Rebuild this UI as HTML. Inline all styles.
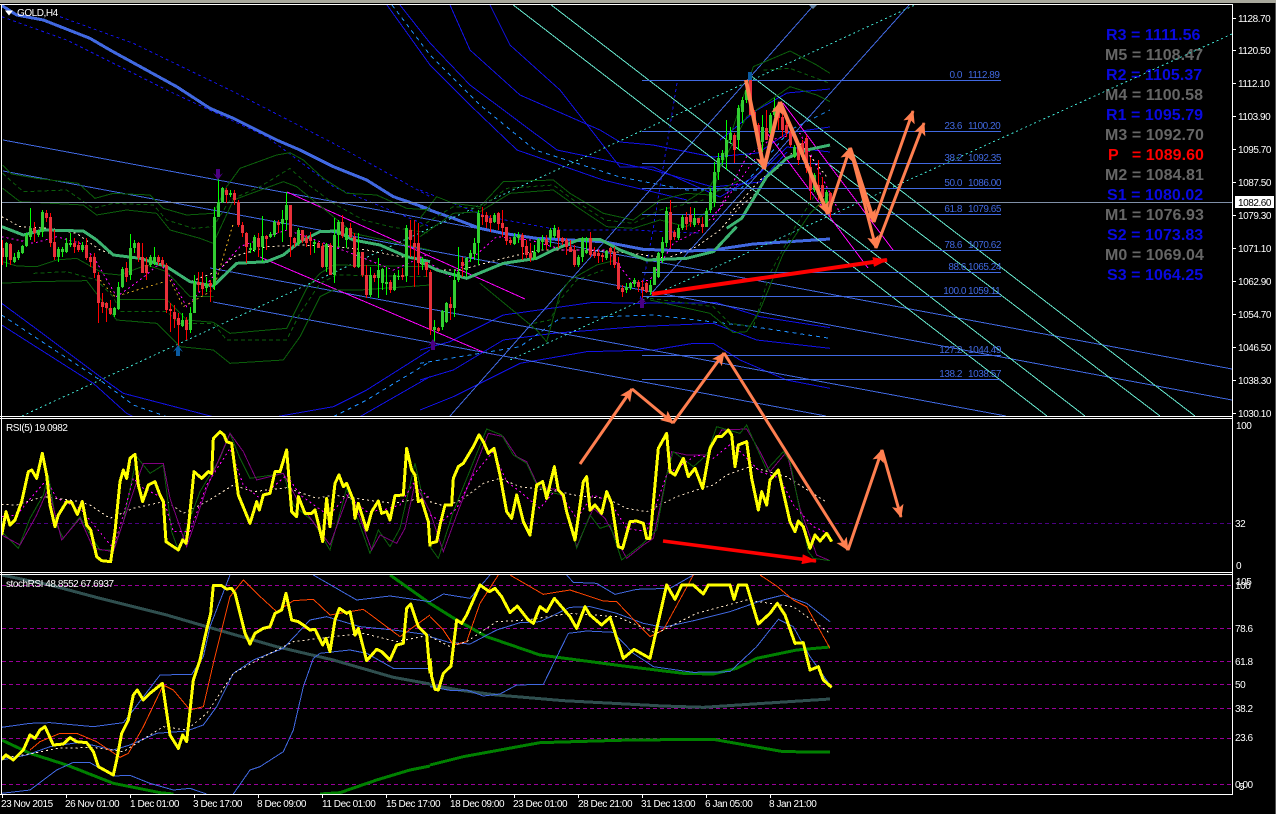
<!DOCTYPE html>
<html><head><meta charset="utf-8"><title>GOLD,H4</title>
<style>
html,body{margin:0;padding:0;background:#000;width:1276px;height:814px;overflow:hidden}
svg{display:block;font-family:"Liberation Sans",sans-serif}
polyline,line,path{fill:none;vector-effect:non-scaling-stroke}
.cr{shape-rendering:crispEdges}
.g{stroke:#0b5e0b;stroke-width:1}
.gd{stroke:#0b5e0b;stroke-width:1;stroke-dasharray:4 3}
.b{stroke:#1212e8;stroke-width:1}
.bd{stroke:#1e90ff;stroke-width:1;stroke-dasharray:4 4}
.bd2{stroke:#1212e8;stroke-width:1;stroke-dasharray:3 3}
.rb{stroke:#4169e1;stroke-width:1}
.rb3{stroke:#4169e1;stroke-width:3}
.cy{stroke:#40e0d0;stroke-width:1;stroke-dasharray:2 3}
.aq{stroke:#66e6cc;stroke-width:1}
.tl{stroke:#3cb371;stroke-width:3}
.cd{stroke:#ffe8c8;stroke-width:1;stroke-dasharray:2 3}
.mg{stroke:#ff00ff;stroke-width:1}
.md{stroke:#ff00ff;stroke-width:1;stroke-dasharray:2 3}
.od{stroke:#daa520;stroke-width:1;stroke-dasharray:2 3}
.y{stroke:#ffff00;stroke-width:3;stroke-linejoin:round}
.pu{stroke:#800080;stroke-width:1}
.lv{stroke:#990099;stroke-width:1;stroke-dasharray:4 3}
.sl{stroke:#2f4f4f;stroke-width:3}
.gr{stroke:#008000;stroke-width:3}
.rd{stroke:#ff4500;stroke-width:1}
.o{stroke:#ff7f50;stroke-width:3;marker-end:url(#ao)}
.ax{fill:#fff;font-size:10px;letter-spacing:-.45px}
.fb{fill:#4169e1;font-size:10px;letter-spacing:-.45px}
.pv{font-size:16px;font-weight:bold;letter-spacing:.05px}
</style></head><body>
<svg width="1276" height="814" viewBox="0 0 1276 814" xmlns="http://www.w3.org/2000/svg">
<defs>
<marker id="ao" markerUnits="userSpaceOnUse" markerWidth="14" markerHeight="12" refX="12" refY="6" orient="auto"><path d="M0 0L13 6L0 12L3 6Z" style="fill:#ff7f50;stroke:none"/></marker>
<marker id="ar" markerUnits="userSpaceOnUse" markerWidth="16" markerHeight="10" refX="14" refY="5" orient="auto"><path d="M0 0L15 5L0 10Z" style="fill:#ff0000;stroke:none"/></marker>
<clipPath id="c1"><rect x="2" y="5" width="1230" height="411"/></clipPath>
<clipPath id="c2"><rect x="2" y="419" width="1230" height="152"/></clipPath>
<clipPath id="c3"><rect x="2" y="575" width="1230" height="219"/></clipPath>
</defs>
<rect width="1276" height="814" fill="#000"/>
<rect x="0" y="0" width="1276" height="3" fill="#a8a89c"/>
<rect x="1275" y="3" width="1" height="811" fill="#555"/>

<!-- MAIN PANEL -->
<g clip-path="url(#c1)" class="cr">
<g><!-- pivots -->
<text class="pv" x="1106" y="40" fill="#0a0ae0">R3 = 1111.56</text>
<text class="pv" x="1105" y="60" fill="#666">M5 = 1108.47</text>
<text class="pv" x="1106" y="80" fill="#0a0ae0">R2 = 1105.37</text>
<text class="pv" x="1105" y="100" fill="#666">M4 = 1100.58</text>
<text class="pv" x="1106" y="120" fill="#0a0ae0">R1 = 1095.79</text>
<text class="pv" x="1105" y="140" fill="#666">M3 = 1092.70</text>
<text class="pv" x="1108" y="160" fill="#f00" xml:space="preserve">P   = 1089.60</text>
<text class="pv" x="1105" y="180" fill="#666">M2 = 1084.81</text>
<text class="pv" x="1107" y="200" fill="#0a0ae0">S1 = 1080.02</text>
<text class="pv" x="1105" y="220" fill="#666">M1 = 1076.93</text>
<text class="pv" x="1107" y="240" fill="#0a0ae0">S2 = 1073.83</text>
<text class="pv" x="1105" y="260" fill="#666">M0 = 1069.04</text>
<text class="pv" x="1107" y="280" fill="#0a0ae0">S3 = 1064.25</text>
</g>
<!-- far blue curves -->
<polyline class="b" points="450,5 470,50 520,95 600,130 620,142 653,145 713,157 758,153 787,133 830,127"/>
<polyline class="b" points="490,5 510,45 560,90 620,167 653,167 720,197 760,173 787,147 830,152"/>
<polyline class="b" points="387,5 430,65 470,105 517,150 603,180 687,200"/>
<polyline class="b" points="400,5 430,43 470,85 557,150 653,170 713,187 760,182 787,152"/>
<polyline class="bd" points="392,5 430,55 480,105 535,150 620,177 687,190 740,190 790,130 830,110"/>
<polyline class="b" points="720,140 757,110 787,93 830,89"/>
<polyline class="bd2" points="677,83 666,150 653,230 640,300"/>
<!-- lower blue bands -->
<g transform="translate(0,150) scale(.33333)">
<polyline class="b" points="5,460 100,530 300,680 370,730 600,790 680,810"/>
<polyline class="b" points="5,525 280,700 380,790 420,810"/>
<polyline class="bd" points="5,495 300,690 400,765 500,800"/>
<polyline class="b" points="830,800 1000,770 1100,720 1290,600"/>
<polyline class="bd" points="1000,800 1100,750 1290,635"/>
<polyline class="b" points="1080,800 1290,680"/>
</g>
<g transform="translate(420,150) scale(.33333)">
<polyline class="b" points="0,600 90,575 250,495 520,457 650,460 890,458 1020,500 1230,533"/>
<polyline class="b" points="0,690 100,660 250,570 400,550 650,530 880,520 1010,570 1230,595"/>
<polyline class="b" points="0,780 100,740 300,640 500,605 700,600 820,580 880,580 960,630 1100,690 1230,715"/>
<polyline class="bd" points="0,640 300,590 420,505 700,495 1000,530 1230,565"/>
</g>
<!-- thick MA -->
<g transform="scale(.33333)">
<polyline class="bd2" points="180,50 400,130 700,275 1000,430 1290,590"/>
<polyline class="bd2" points="5,50 200,120 500,270 800,410 1000,560 1290,680"/>
<polyline class="rb3" points="3,15 50,45 130,60 270,115 330,150 430,205 530,260 630,325 700,355 830,420 900,450 1000,500 1100,540 1180,590 1290,628"/>
</g>
<g transform="translate(420,150) scale(.33333)">
<polyline class="bd2" points="0,120 200,200 420,240 640,240 840,250"/>
<polyline class="rb3" points="0,170 100,205 180,235 250,250 350,265 450,270 550,275 670,298 800,303 880,300 1000,282 1230,267"/>
</g>
<!-- trend lines -->
<polyline class="rb" points="3,140 1232,369"/>
<polyline class="rb" points="3,171 1232,400"/>
<polyline class="rb" points="210,268 1006,416"/>
<polyline class="rb" points="213,302 826,416"/>
<polyline class="rb" points="813,6 450,416"/>
<polyline class="rb" points="910,4 650,295"/>
<polyline class="cy" points="22,416 915,5"/>
<polyline class="cy" points="1232,34 510,360"/>
<polyline class="aq" points="512,4 1047,416"/>
<polyline class="aq" points="550,4 1085,416"/>
<polyline class="aq" points="830,165 1160,416"/>
<polyline class="aq" points="750,75 1195,416"/>
<polyline class="mg" points="287,192 525,299"/>
<polyline class="mg" points="260,257 483,352"/>
<polyline class="mg" points="783,103 893,250"/>
<polyline class="mg" points="767,133 868,268"/>
<!-- green bands -->
<g transform="translate(0,150) scale(.33333)">
<polyline class="g" points="8,45 35,72 110,85 235,100 285,145 340,130 450,135 490,175 560,195 640,190 680,110 720,55 830,15 870,8 910,30 970,85 1040,130 1130,135 1220,175 1290,180"/>
<polyline class="gd" points="8,70 70,125 200,120 280,175 340,160 460,165 500,210 580,235 640,230 690,150 780,110 870,55 920,100 1000,160 1090,210 1170,230 1290,250"/>
<polyline class="g" points="8,115 60,155 250,165 290,195 380,180 470,190 510,240 600,265 640,280 700,150 850,95 890,110 1000,200 1060,250 1290,300"/>
<polyline class="g" points="8,335 50,348 110,350 170,330 230,325 310,370 360,375 440,345 500,365 570,440 640,440"/>
<polyline class="gd" points="100,370 200,365 290,390 340,440 360,485 500,485 540,520 640,520 680,570 860,570 900,490 960,400 1010,375 1290,380"/>
<polyline class="g" points="0,400 100,395 260,392 350,510 470,520 540,590 640,600 690,640 850,630 900,560 960,440 1000,420 1080,420 1290,405"/>
<polyline class="g" points="360,448 500,448 560,510 640,517 690,550 860,535 920,415 960,370 1000,345 1290,350"/>
</g>
<g transform="translate(420,150) scale(.33333)">
<polyline class="g" points="0,205 50,140 100,160 180,170 250,95 400,90 450,130 550,190 640,210 720,150 800,130 870,135 960,90"/>
<polyline class="gd" points="0,230 100,170 180,175 260,115 400,105 460,150 555,210 640,220 720,180 850,150"/>
<polyline class="g" points="0,260 100,190 180,185 270,130 400,120 470,170 560,230 640,235 720,210 800,230 880,170"/>
<polyline class="g" points="180,400 350,540 380,575 420,430 450,390 530,345 590,330"/>
<polyline class="gd" points="340,520 390,510 420,450 470,390 550,360"/>
<polyline class="g" points="690,450 870,490 940,548 980,545 1020,480 1090,310 1170,190 1230,130"/>
<polyline class="gd" points="690,445 880,470 930,520 1000,530 1050,370 1120,240 1200,110"/>
</g>
<g transform="translate(620,0) scale(.33333)">
<polyline class="g" points="270,620 300,500 400,200 510,153 590,195 630,220"/>
<polyline class="g" points="190,610 270,560 380,350 510,260 590,285 630,305"/>
<polyline class="gd" points="430,210 510,205 630,250"/>
</g>
<!-- cream / magenta small MA -->
<g transform="translate(0,150) scale(.33333)">
<polyline class="cd" points="5,200 60,230 150,235 230,250 300,300 360,320 420,325 500,350 570,395 650,365 700,320 800,290 900,285 1000,290 1100,300 1200,320 1290,335"/>
<polyline class="md" points="5,260 100,280 170,260 240,280 280,320 350,440 420,390 480,340 510,380 560,470 640,380 720,290 800,260 860,240 920,260 1000,290 1080,320 1180,360 1290,310"/>
<polyline class="od" points="300,390 345,440 510,390 550,470 640,420 700,220"/>
</g>
<g transform="translate(420,150) scale(.33333)">
<polyline class="cd" points="0,340 60,360 120,360 250,325 360,300 500,300 640,310 740,325 830,290 900,240 960,170 1020,120"/>
<polyline class="md" points="0,320 90,380 140,340 230,260 330,270 430,300 560,300 640,400 690,390 760,280 840,240 900,175 960,90 1010,20"/>
</g>
<g transform="translate(620,0) scale(.33333)">
<polyline class="md" points="280,660 380,470 450,420 540,400 620,560 660,640"/>
<polyline class="cd" points="330,640 420,540 480,500 540,430 620,530"/>
</g>
<!-- teal MA -->
<g transform="translate(0,150) scale(.33333)">
<polyline class="tl" points="5,230 70,255 130,240 250,243 290,270 340,315 420,325 500,350 570,395 640,408 710,340 800,335 850,315 900,275 960,245 1010,243 1060,270 1140,285 1220,320 1290,335"/>
</g>
<g transform="translate(420,150) scale(.33333)">
<polyline class="tl" points="0,335 50,360 140,385 250,340 350,325 400,300 480,268 540,268 600,300 680,330 800,325 880,305 950,230"/>
</g>
<g transform="translate(620,0) scale(.33333)">
<polyline class="tl" points="320,685 365,655 440,530 500,475 560,450 630,435"/>
</g>
</g>
<!-- fib lines -->
<g class="cr">
<path class="rb" d="M642 80.5H1001M642 131.5H1001M642 163.5H1001M642 188.5H1001M642 214.5H1001M642 250.5H1001M642 272.5H1001M642 296.5H1001M642 355.5H1001M642 379.5H1001"/>
</g>
<g text-anchor="end">
<text class="fb" x="962" y="78">0.0</text><text class="fb" x="962" y="129">23.6</text><text class="fb" x="962" y="161">38.2</text><text class="fb" x="962" y="186">50.0</text><text class="fb" x="962" y="212">61.8</text><text class="fb" x="962" y="248">78.6</text><text class="fb" x="966" y="270">88.6</text><text class="fb" x="966" y="294">100.0</text><text class="fb" x="962" y="353">127.2</text><text class="fb" x="962" y="377">138.2</text>
</g>
<g>
<text class="fb" x="968" y="78">1112.89</text><text class="fb" x="968" y="129">1100.20</text><text class="fb" x="968" y="161">1092.35</text><text class="fb" x="968" y="186">1086.00</text><text class="fb" x="968" y="212">1079.65</text><text class="fb" x="968" y="248">1070.62</text><text class="fb" x="968" y="270">1065.24</text><text class="fb" x="968" y="294">1059.11</text><text class="fb" x="968" y="353">1044.49</text><text class="fb" x="968" y="377">1038.57</text>
</g>
<rect x="2" y="202" width="1230" height="1" fill="#8090a8"/>

<!-- CANDLES -->
<g class="cr">
<path stroke="#ff0000" stroke-width="1" d="M2.5 240V265M10.5 243V265M34.5 222V242M46.5 210V222M50.5 213V247M54.5 230V260M74.5 238V253M78.5 241V252M86.5 238V260M90.5 255V267M94.5 253V278M98.5 272V323M102.5 293V313M106.5 302V322M110.5 300V315M126.5 262V282M138.5 242V262M142.5 243V273M146.5 257V280M158.5 255V265M162.5 257V267M166.5 263V313M170.5 303V332M174.5 305V328M178.5 313V350M186.5 317V340M198.5 272V292M202.5 272V295M210.5 280V302M226.5 188V203M234.5 190V205M238.5 200V227M242.5 222V237M246.5 232V263M258.5 233V257M266.5 235V250M278.5 220V233M290.5 205V257M294.5 237V247M302.5 230V243M306.5 235V247M310.5 232V255M318.5 242V248M322.5 243V268M330.5 243V275M342.5 215V238M350.5 223V238M354.5 233V268M362.5 252V277M366.5 265V298M374.5 273V282M390.5 280V293M402.5 268V280M410.5 220V257M414.5 220V287M418.5 223V275M426.5 262V277M430.5 270V335M438.5 327V332M450.5 297V320M462.5 257V277M482.5 207V225M486.5 212V228M490.5 215V232M498.5 212V230M502.5 210V237M506.5 227V245M510.5 238V245M522.5 233V260M526.5 240V258M530.5 243V262M546.5 235V250M558.5 227V248M562.5 237V245M566.5 238V255M570.5 240V252M574.5 245V267M590.5 232V257M594.5 247V258M598.5 250V263M602.5 253V262M610.5 247V265M614.5 247V268M618.5 257V290M622.5 285V297M638.5 280V292M642.5 280V300M646.5 282V293M670.5 200V248M674.5 230V240M686.5 212V230M690.5 207V227M698.5 218V225M702.5 217V233M734.5 133V163M750.5 72V115M754.5 110V127M758.5 123V150M766.5 110V140M778.5 102V130M782.5 113V137M786.5 118V137M790.5 128V147M798.5 142V165M802.5 140V160M806.5 135V173M810.5 157V200M818.5 160V200M822.5 177V203M830.5 192V217"/>
<path stroke="#e8303a" stroke-width="3" d="M2.5 248V257M10.5 244V260M34.5 228V233M46.5 213V218M50.5 217V243M54.5 242V257M74.5 243V247M78.5 245V250M86.5 245V258M90.5 257V262M94.5 257V273M98.5 275V303M102.5 302V307M106.5 303V308M110.5 308V314M126.5 268V277M138.5 243V258M142.5 257V273M146.5 265V273M158.5 257V262M162.5 260V265M166.5 265V310M170.5 309V311M174.5 312V319M178.5 318V325M186.5 320V330M198.5 282V285M202.5 283V289M210.5 283V286M226.5 190V195M234.5 193V200M238.5 202V225M242.5 225V233M246.5 233V247M258.5 238V247M266.5 236V239M278.5 222V225M290.5 205V237M294.5 238V243M302.5 230V241M306.5 238V243M310.5 237V241M318.5 243V248M322.5 246V267M330.5 245V275M342.5 222V236M350.5 228V237M354.5 237V267M362.5 252V275M366.5 275V295M374.5 275V278M390.5 282V290M402.5 275V277M410.5 230V240M414.5 243V247M418.5 243V263M426.5 262V270M430.5 272V330M438.5 328V331M450.5 304V308M462.5 262V266M482.5 215V217M486.5 215V222M490.5 218V223M498.5 213V224M502.5 223V228M506.5 227V241M510.5 240V243M522.5 235V247M526.5 246V255M530.5 253V258M546.5 239V245M558.5 230V238M562.5 238V242M566.5 240V247M570.5 247V252M574.5 250V265M590.5 238V255M594.5 252V256M598.5 253V256M602.5 255V257M610.5 248V252M614.5 252V265M618.5 263V289M622.5 288V292M638.5 282V287M642.5 287V290M646.5 283V292M670.5 212V240M674.5 232V237M686.5 217V224M690.5 215V222M698.5 218V223M702.5 224V227M734.5 135V150M750.5 80V115M754.5 112V125M758.5 125V143M766.5 128V140M778.5 105V118M782.5 117V130M786.5 125V133M790.5 132V145M798.5 145V160M802.5 143V157M806.5 138V168M810.5 167V190M818.5 185V195M822.5 185V197M830.5 193V212"/>
<path stroke="#00ff00" stroke-width="1" d="M6.5 242V267M14.5 253V263M18.5 250V260M22.5 245V254M26.5 233V247M30.5 208V240M38.5 230V237M42.5 210V237M58.5 247V262M62.5 247V257M66.5 238V253M70.5 233V247M82.5 242V252M114.5 307V317M118.5 282V310M122.5 267V288M130.5 234V280M134.5 240V253M150.5 255V267M154.5 247V265M182.5 313V327M190.5 307V333M194.5 275V313M206.5 277V292M214.5 207V290M218.5 177V217M222.5 187V203M230.5 190V197M250.5 243V253M254.5 235V252M262.5 216V262M270.5 232V238M274.5 220V237M282.5 210V242M286.5 192V230M298.5 228V245M314.5 240V253M326.5 243V272M334.5 218V283M338.5 220V247M346.5 227V248M358.5 233V268M370.5 267V297M378.5 258V298M382.5 268V290M386.5 267V295M394.5 273V291M398.5 270V280M406.5 225V282M422.5 257V270M434.5 320V343M442.5 310V330M446.5 302V323M454.5 270V317M458.5 247V282M466.5 257V277M470.5 250V262M474.5 238V260M478.5 210V265M494.5 213V223M514.5 233V245M518.5 232V243M534.5 245V260M538.5 238V253M542.5 235V250M550.5 228V247M554.5 225V238M578.5 255V267M582.5 237V262M586.5 237V254M606.5 250V260M626.5 283V293M630.5 282V290M634.5 278V287M650.5 280V295M654.5 267V285M658.5 252V278M662.5 237V263M666.5 207V247M678.5 225V240M682.5 215V230M694.5 208V227M706.5 208V227M710.5 188V213M714.5 162V207M718.5 153V180M722.5 150V165M726.5 120V170M730.5 127V143M738.5 105V150M742.5 97V123M746.5 80V103M762.5 115V152M770.5 113V140M774.5 98V117M794.5 145V158M814.5 173V192M826.5 190V213"/>
<path stroke="#32cd32" stroke-width="3" d="M6.5 243V257M14.5 257V262M18.5 252V258M22.5 246V253M26.5 235V246M30.5 228V237M38.5 232V235M42.5 212V232M58.5 249V257M62.5 249V252M66.5 243V252M70.5 243V245M82.5 245V250M114.5 308V315M118.5 287V309M122.5 269V287M130.5 248V275M134.5 243V248M150.5 257V265M154.5 257V263M182.5 320V326M190.5 313V330M194.5 283V313M206.5 284V288M214.5 217V285M218.5 202V217M222.5 188V202M230.5 193V195M250.5 248V250M254.5 237V250M262.5 236V247M270.5 234V237M274.5 222V235M282.5 219V224M286.5 205V220M298.5 230V243M314.5 242V244M326.5 244V267M334.5 235V275M338.5 222V235M346.5 228V240M358.5 252V267M370.5 275V295M378.5 270V278M382.5 269V283M386.5 282V284M394.5 275V290M398.5 276V277M406.5 228V276M422.5 262V264M434.5 327V330M442.5 311V327M446.5 303V322M454.5 280V308M458.5 272V280M466.5 258V270M470.5 253V258M474.5 243V254M478.5 213V243M494.5 215V222M514.5 237V244M518.5 235V238M534.5 252V259M538.5 239V252M542.5 239V242M550.5 230V238M554.5 228V236M578.5 257V265M582.5 238V257M586.5 250V253M606.5 251V258M626.5 287V290M630.5 283V288M634.5 280V284M650.5 285V292M654.5 267V285M658.5 253V277M662.5 242V253M666.5 211V243M678.5 228V238M682.5 217V228M694.5 218V225M706.5 211V227M710.5 192V210M714.5 172V203M718.5 158V172M722.5 153V160M726.5 140V157M730.5 133V140M738.5 108V140M742.5 100V112M746.5 90V100M762.5 127V142M770.5 115V133M774.5 108V115M794.5 147V157M814.5 175V190M826.5 192V203"/>
</g>
<!-- fractal arrows -->
<path style="fill:#4b0082;stroke:none" d="M216 169h4v6l3-2-5 7-5-7 3 2z"/>
<path style="fill:#0a5aa0;stroke:none" d="M176 356h4v-6l3 2-5-7-5 7 3-2z"/>
<path style="fill:#4b0082;stroke:none" d="M431 350h4v-6l3 2-5-7-5 7 3-2z"/>
<path style="fill:#4b0082;stroke:none" d="M640 308h4v-6l3 2-5-7-5 7 3-2z"/>
<path style="fill:#0a5aa0;stroke:none" d="M748 72h4v8h-4z"/>
<path style="fill:#6080a0;stroke:none" d="M808 4h10l-5 5z"/>

<!-- RSI -->
<g clip-path="url(#c2)">
<line class="cr" x1="2" y1="523.5" x2="1232" y2="523.5" stroke="#4b0082" stroke-dasharray="4 3"/>
<g transform="translate(0,415) scale(.33333)" class="cr">
<polyline class="cd" points="5,268 50,270 130,245 230,258 270,270 330,310 400,280 500,258 550,295 620,260 700,210 760,230 860,218 950,250 1000,240 1100,255 1180,265 1290,245"/>
<polyline class="g" points="5,350 55,400 90,310 130,240 145,180 170,330 190,370 240,305 270,360 300,405 340,405 370,320 410,125 450,175 490,150 515,350 535,405 600,230 660,130 690,55 720,130 750,190 850,175 880,270 940,320 990,405 1040,220 1110,415 1135,345 1170,395 1200,340 1245,145 1280,300"/>
<polyline class="pu" points="5,360 60,390 110,300 145,220 185,375 240,310 280,400 340,410 400,230 430,145 490,145 510,250 560,395 620,220 690,55 730,110 770,195 850,175 895,260 990,390 1050,225 1115,405 1140,360 1190,385 1215,340 1245,205 1290,290"/>
<polyline class="md" points="5,305 50,300 100,240 140,195 170,250 240,280 290,340 340,400 370,300 400,190 430,220 490,250 520,350 570,350 620,210 690,100 730,210 780,250 860,180 900,240 970,290 990,300 1040,240 1100,290 1150,285 1200,270 1240,205 1290,250"/>
<polyline class="y" points="5,360 18,290 30,330 45,315 65,260 85,170 95,165 110,190 127,115 140,180 150,270 165,335 175,300 200,260 215,262 232,298 247,260 260,330 272,345 290,425 305,437 332,440 345,350 360,200 370,165 380,190 390,130 405,118 415,210 428,260 445,210 465,200 480,240 490,260 498,380 520,395 535,405 548,375 558,385 565,340 582,170 605,190 625,170 635,175 640,70 660,50 672,60 680,80 695,85 715,240 750,325 770,260 778,285 790,240 810,235 825,170 840,170 860,105 875,290 890,305 895,245 915,295 935,295 945,285 968,380 980,250 990,335 1005,205 1017,180 1030,215 1040,205 1060,255 1065,310 1075,265 1100,345 1115,290 1135,258 1145,295 1160,290 1170,315 1185,242 1210,240 1220,100 1235,165 1245,180 1255,260 1265,255 1285,320 1290,395"/>
</g>
<g transform="translate(430,415) scale(.33333)" class="cr">
<polyline class="cd" points="0,260 50,275 100,250 160,205 210,190 270,215 390,230 430,240 470,245 530,250 590,280 650,290 700,265 740,245 800,225 850,210 890,180 960,155 1070,185 1190,262"/>
<polyline class="pu" points="0,290 40,410 80,300 130,170 175,55 220,65 260,125 290,140 325,215 390,225 440,395 490,280 525,310 590,430 640,390 670,370 725,110 770,120 830,120 875,45 950,42 990,110 1020,170 1070,110 1110,280 1160,420 1200,437"/>
<polyline class="g" points="0,395 25,430 70,290 170,42 215,60 250,120 290,145 320,210 350,230 400,240 440,400 480,300 510,340 540,330 575,435 640,385 680,345 710,180 730,110 790,155 830,120 860,35 930,55 950,30 1010,165 1060,110 1080,140 1135,410 1150,430 1200,437"/>
<polyline class="md" points="0,300 35,320 80,280 130,180 190,110 230,200 270,230 330,280 380,220 440,310 490,240 540,260 590,340 650,350 710,180 800,120 850,130 905,85 990,170 1050,190 1090,270 1150,335 1195,355"/>
<polyline class="y" points="0,385 20,380 30,330 45,270 65,270 70,190 85,155 100,145 130,95 147,60 160,80 175,115 192,100 210,180 230,290 245,310 260,240 280,320 300,360 320,210 338,200 350,250 373,155 385,225 400,240 410,290 435,375 460,200 470,185 480,285 495,270 515,295 530,230 545,265 565,395 578,400 600,320 620,318 640,325 650,370 660,370 665,320 685,100 710,55 720,170 735,180 760,130 775,185 795,160 818,220 840,100 860,65 875,65 895,45 905,60 915,155 925,90 950,80 965,190 985,285 995,230 1010,270 1020,195 1045,165 1080,320 1095,350 1105,318 1120,335 1140,400 1155,360 1170,378 1190,355 1205,380"/>
</g>
</g>

<!-- STOCH -->
<g clip-path="url(#c3)">
<g class="cr">
<path class="lv" d="M2 585.5H1232M2 628.5H1232M2 661.5H1232M2 684.5H1232M2 708.5H1232M2 738.5H1232M2 784.5H1232"/>
</g>
<g transform="translate(0,570) scale(.33333)" class="cr">
<polyline class="sl" points="5,15 150,45 300,85 500,135 620,170 830,230 1000,270 1180,322 1290,342"/>
<polyline class="gr" points="5,510 90,550 200,585 340,640 480,668 520,672"/>
<polyline class="gr" points="1170,15 1290,100"/>
<polyline class="gr" points="960,672 1020,668 1130,630 1230,600 1290,588"/>
<polyline class="rb" points="5,472 90,460 150,458 280,470 370,458 400,420 480,315 575,313 610,260 630,170 690,15"/>
<polyline class="rb" points="5,670 90,660 170,600 220,577 270,578 340,618 390,616 450,640 520,660 570,655 620,672"/>
<polyline class="rb" points="5,570 80,555 150,530 240,517 340,540 390,525 470,490 560,483 610,465 650,410 700,310 760,270 850,235 930,150 980,140 1080,170 1180,180 1290,195"/>
<polyline class="rb" points="700,672 750,600 780,590 850,545 880,480 910,350 940,265 960,250 1050,240 1100,250 1180,295 1290,295"/>
<polyline class="rb" points="940,15 1070,90 1170,78 1290,95"/>
<polyline class="rd" points="90,540 120,515 180,490 230,490 290,515 360,562 385,550 430,470 490,345 520,360 570,420 610,410 640,280 690,80 730,30 770,70 830,125 880,92 940,88 990,135 1090,118 1200,200 1290,135"/>
<polyline class="cd" points="5,565 100,550 170,535 280,532 370,545 490,470 560,480 620,430 700,310 800,255 880,215 1000,200 1090,190 1190,215 1290,195"/>
<polyline class="y" points="5,568 18,555 40,570 70,540 90,495 105,505 120,480 135,470 160,525 190,522 210,503 230,515 260,518 280,545 295,590 340,615 350,570 365,490 385,450 400,375 412,360 430,390 450,370 487,340 510,495 535,535 548,495 560,515 580,330 600,270 615,200 632,130 640,47 665,47 680,57 695,55 705,70 735,190 750,222 765,190 790,175 810,170 825,130 845,120 858,70 875,150 895,155 910,165 930,180 945,178 968,225 978,205 990,245 1005,150 1018,115 1040,130 1050,125 1065,195 1075,175 1100,272 1130,238 1145,245 1170,270 1190,225 1210,220 1220,115 1232,102 1255,170 1280,195 1290,310"/>
</g>
<g transform="translate(430,570) scale(.33333)" class="cr">
<polyline class="sl" points="0,345 100,362 200,375 400,392 700,408 820,412 1000,400 1200,387"/>
<polyline class="gr" points="0,100 80,150 170,200 330,255 580,288 760,310 850,312 920,295 980,265 1100,240 1200,231"/>
<polyline class="gr" points="0,585 100,560 330,518 600,510 850,508 1060,545 1200,546"/>
<polyline class="rb" points="0,95 40,72 120,85 180,15"/>
<polyline class="rb" points="410,15 430,37 500,40 555,73 620,58 720,55 790,15"/>
<polyline class="rb" points="0,200 60,218 120,222 200,180 270,158 330,155 420,112 480,110 560,130 640,160 700,172 800,150 900,125 1000,90 1060,75 1130,100 1200,155"/>
<polyline class="rb" points="0,350 65,362 110,360 160,378 210,372 260,345 340,343 415,190 470,183 550,187 610,250 670,290 790,307 900,305 980,230 1045,148 1090,170 1140,260 1205,352"/>
<polyline class="rd" points="0,140 40,180 70,225 110,215 150,100 205,15"/>
<polyline class="rd" points="240,15 340,73 420,60 520,93 560,95 660,200 700,180 790,15"/>
<polyline class="rd" points="990,15 1040,48 1090,90 1130,110 1200,235"/>
<polyline class="cd" points="0,200 60,230 110,215 200,155 290,150 420,130 560,140 680,190 800,130 950,90 1090,110 1200,190"/>
<polyline class="y" points="0,265 5,320 15,358 25,360 40,310 63,288 80,150 95,160 110,135 150,45 178,65 195,55 215,80 240,128 262,108 295,150 310,160 330,110 350,125 373,85 420,140 440,175 465,110 480,135 515,165 540,142 580,265 612,238 660,265 710,45 735,88 755,45 790,45 820,72 835,45 900,45 912,88 925,45 950,45 985,162 1020,130 1042,100 1065,135 1095,220 1120,218 1140,300 1165,290 1180,330 1205,352"/>
</g>
</g>

<!-- borders -->
<g fill="#fff" class="cr">
<rect x="0" y="4" width="1233" height="1"/>
<rect x="1" y="4" width="1" height="791"/>
<rect x="1232" y="4" width="1" height="791"/>
<rect x="0" y="416" width="1233" height="1"/>
<rect x="0" y="418" width="1233" height="1"/>
<rect x="0" y="572" width="1233" height="1"/>
<rect x="0" y="574" width="1233" height="1"/>
<rect x="0" y="794" width="1233" height="1"/>
</g>
<!-- orange arrows -->
<g>
<line class="o" x1="580" y1="464" x2="632" y2="389"/>
<line class="o" x1="632" y1="389" x2="673" y2="423"/>
<line class="o" x1="673" y1="423" x2="724" y2="353"/>
<line class="o" x1="724" y1="353" x2="848" y2="550"/>
<line class="o" x1="848" y1="550" x2="882" y2="450"/>
<line class="o" x1="882" y1="450" x2="901" y2="517"/>
<line class="o" style="stroke-width:4" x1="746" y1="80" x2="764" y2="169"/>
<line class="o" style="stroke-width:4" x1="764" y1="169" x2="780" y2="102"/>
<line class="o" style="stroke-width:4" x1="780" y1="102" x2="828" y2="214"/>
<line class="o" x1="828" y1="214" x2="850" y2="148"/>
<line class="o" style="stroke-width:4" x1="850" y1="148" x2="874" y2="222"/>
<line class="o" x1="850" y1="148" x2="876" y2="248"/>
<line class="o" x1="874" y1="222" x2="913" y2="111"/>
<line class="o" x1="876" y1="248" x2="924" y2="123"/>
<line stroke="#ff0000" stroke-width="4" marker-end="url(#ar)" x1="652" y1="294" x2="887" y2="260"/>
<line stroke="#ff0000" stroke-width="3.5" marker-end="url(#ar)" x1="663" y1="541" x2="816" y2="561"/>
</g>

<!-- labels -->
<path d="M5 10.5h8l-4 5z" style="fill:#fff;stroke:none"/>
<text class="ax" x="17" y="16">GOLD,H4</text>
<text class="ax" x="6" y="431">RSI(5) 19.0982</text>
<text class="ax" x="6" y="587">stochRSI 48.8552 67.6937</text>

<g class="cr"><path stroke="#fff" d="M1233 18.5h3M1233 50.5h3M1233 83.5h3M1233 116.5h3M1233 149.5h3M1233 182.5h3M1233 215.5h3M1233 248.5h3M1233 281.5h3M1233 314.5h3M1233 347.5h3M1233 380.5h3M1233 413.5h3M2.5 795v3M66.5 795v3M130.5 795v3M194.5 795v3M258.5 795v3M322.5 795v3M386.5 795v3M450.5 795v3M514.5 795v3M578.5 795v3M642.5 795v3M706.5 795v3M770.5 795v3"/></g>
<g class="ax">
<text x="1238" y="22">1128.70</text><text x="1238" y="54">1120.50</text><text x="1238" y="87">1112.10</text><text x="1238" y="120">1103.90</text><text x="1238" y="153">1095.70</text><text x="1238" y="186">1087.50</text><text x="1238" y="219">1079.30</text><text x="1238" y="252">1071.10</text><text x="1238" y="285">1062.90</text><text x="1238" y="318">1054.70</text><text x="1238" y="351">1046.50</text><text x="1238" y="384">1038.30</text><text x="1238" y="417">1030.10</text>
<text x="1236" y="429">100</text><text x="1235" y="527">32</text><text x="1236" y="569">0</text>
<text x="1236" y="585">105</text><text x="1235" y="589">100</text><text x="1235" y="632">78.6</text><text x="1235" y="665">61.8</text><text x="1235" y="688">50</text><text x="1235" y="712">38.2</text><text x="1235" y="741">23.6</text><text x="1235" y="788">0.00</text><text x="1236" y="790">-5</text>
<text x="1" y="807">23 Nov 2015</text><text x="65" y="807">26 Nov 01:00</text><text x="130" y="807">1 Dec 01:00</text><text x="193" y="807">3 Dec 17:00</text><text x="257" y="807">8 Dec 09:00</text><text x="322" y="807">11 Dec 01:00</text><text x="386" y="807">15 Dec 17:00</text><text x="450" y="807">18 Dec 09:00</text><text x="513" y="807">23 Dec 01:00</text><text x="578" y="807">28 Dec 21:00</text><text x="641" y="807">31 Dec 13:00</text><text x="705" y="807">6 Jan 05:00</text><text x="769" y="807">8 Jan 21:00</text>
</g>
<rect x="1235" y="196" width="39" height="12" fill="#fff"/>
<text x="1238" y="206" fill="#000" font-size="10" letter-spacing="-.45">1082.60</text>
</svg>
</body></html>
